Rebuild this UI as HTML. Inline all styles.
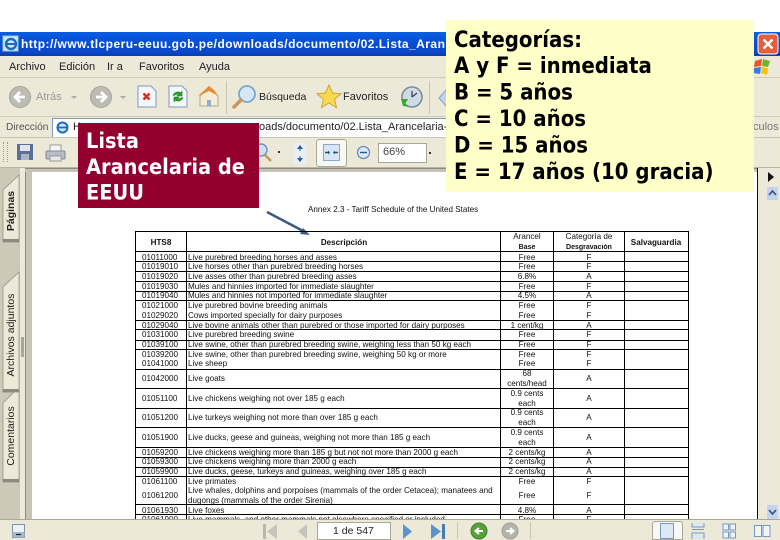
<!DOCTYPE html>
<html><head><meta charset="utf-8">
<style>
html,body{margin:0;padding:0;background:#fff}
#p{position:relative;width:780px;height:540px;overflow:hidden;background:#fff;font-family:"Liberation Sans",sans-serif}
#p div,#p svg{position:absolute}
.t{white-space:nowrap;font-size:11px;color:#222;line-height:14px}
.b{background:#000}
#doc{left:0;top:0;width:780px;height:540px}
#doc span{position:absolute;white-space:nowrap;font-size:8.1px;line-height:10px;color:#111;margin-top:.7px;filter:blur(.35px)}
.c{transform:translateX(-50%)}
</style></head><body><div id="p">

<div style="left:0;top:32px;width:780px;height:24px;background:linear-gradient(#0a5fe0,#0852d8 30%,#0b46c8 85%,#0a3cb0)"></div>
<svg style="left:2px;top:35px" width="17" height="17" viewBox="0 0 17 17"><rect x="1" y="1" width="15" height="15" fill="#cfe6f8" stroke="#9cc"/><circle cx="9" cy="9" r="5" fill="none" stroke="#1a6cc0" stroke-width="2.4"/><path d="M4 9h10" stroke="#1a6cc0" stroke-width="2"/></svg>
<div class="t" style="left:21px;top:37px;font:bold 12px/15px 'Liberation Sans',sans-serif;color:#fff;letter-spacing:.46px">http://www.tlcperu-eeuu.gob.pe/downloads/documento/02.Lista_Aran</div>
<svg style="left:757px;top:33px" width="23" height="23" viewBox="0 0 23 23"><rect x="1" y="1" width="20" height="20" rx="3" fill="#e2603c" stroke="#fff"/><path d="M6.500 6.500l9 9M15.500 6.500l-9 9" stroke="#fff" stroke-width="2.400"/></svg>

<div style="left:0;top:56px;width:780px;height:112px;background:#ece9d8"></div>
<div style="left:0;top:77px;width:780px;height:1px;background:#d0cdbb"></div>
<div class="t" style="left:9px;top:60px">Archivo</div>
<div class="t" style="left:59px;top:60px">Edición</div>
<div class="t" style="left:107px;top:60px">Ir a</div>
<div class="t" style="left:139px;top:60px">Favoritos</div>
<div class="t" style="left:199px;top:60px">Ayuda</div>
<svg style="left:753px;top:58px" width="20" height="18" viewBox="0 0 20 18"><path d="M2 3l7-2-1 7-7 1z" fill="#e8562a"/><path d="M10 1l7 2-2 6-6-1z" fill="#6fb52c"/><path d="M1 10l7-1-1 7-7-1z" fill="#3b7be0"/><path d="M9 9l6 1-1 7-6-2z" fill="#f5c21a"/></svg>

<!-- main toolbar -->
<svg style="left:8px;top:85px" width="25" height="25" viewBox="0 0 25 25"><circle cx="12" cy="12" r="10.500" fill="#bcbcb4" stroke="#a5a59c"/><path d="M17 12H8M12 7l-5 5 5 5" stroke="#fff" stroke-width="2.800" fill="none"/></svg>
<div class="t" style="left:36px;top:90px;color:#999">Atrás</div>
<div style="left:71px;top:96px;border:3px solid transparent;border-top-color:#aaa"></div>
<svg style="left:89px;top:85px" width="25" height="25" viewBox="0 0 25 25"><circle cx="12" cy="12" r="10.500" fill="#bcbcb4" stroke="#a5a59c"/><path d="M7 12h9M12 7l5 5-5 5" stroke="#fff" stroke-width="2.800" fill="none"/></svg>
<div style="left:120px;top:96px;border:3px solid transparent;border-top-color:#aaa"></div>
<svg style="left:137px;top:85px" width="20" height="23" viewBox="0 0 20 23"><path d="M1 1h13l5 5v16H1z" fill="#f4f7fc" stroke="#7e9cc4"/><path d="M6.500 8.500l6 6M12.500 8.500l-6 6" stroke="#d83020" stroke-width="2.600"/></svg>
<svg style="left:168px;top:85px" width="20" height="23" viewBox="0 0 20 23"><path d="M1 1h13l5 5v16H1z" fill="#f4f7fc" stroke="#7e9cc4"/><path d="M5 11a5 5 0 0 1 8-3l1-2v5h-5l2-2M15 12a5 5 0 0 1-8 3l-1 2v-5h5l-2 2" fill="#2aa02a" stroke="#1c801c" stroke-width=".6"/></svg>
<svg style="left:197px;top:84px" width="24" height="24" viewBox="0 0 24 24"><path d="M3 12l9-9 9 9v10H3z" fill="#f3ecd6" stroke="#b0a890"/><path d="M1 12L12 2l5 4 4 6-5-3-4-2z" fill="#e98a30"/><path d="M10 22v-6h4v6z" fill="#8ab0d8"/></svg>
<div style="left:226px;top:81px;width:1px;height:33px;background:#c9c6b4"></div>
<svg style="left:232px;top:84px" width="26" height="26" viewBox="0 0 26 26"><circle cx="15" cy="10" r="8" fill="#d5e8f8" stroke="#7fa5cc" stroke-width="1.800"/><path d="M9 16l-7 7" stroke="#c89858" stroke-width="3.600" stroke-linecap="round"/></svg>
<div class="t" style="left:259px;top:90px;font-size:10.500px">Búsqueda</div>
<svg style="left:316px;top:84px" width="26" height="25" viewBox="0 0 26 25"><path d="M13 1l3.500 8 8.500.8-6.400 5.500 1.900 8.300L13 19l-7.500 4.600 1.900-8.300L1 9.800 9.500 9z" fill="#fbd94f" stroke="#c8a838"/></svg>
<div class="t" style="left:343px;top:90px">Favoritos</div>
<svg style="left:399px;top:85px" width="25" height="25" viewBox="0 0 25 25"><circle cx="13" cy="12" r="10" fill="#cfdbe4" stroke="#7c8c98" stroke-width="1.600"/><path d="M13 12l5-4M13 12V6" stroke="#345" stroke-width="1.300"/><path d="M2 14h7l-3 5 4 3-6-1z" fill="#3aa62c"/></svg>
<div style="left:429px;top:81px;width:1px;height:33px;background:#c9c6b4"></div>
<svg style="left:438px;top:86px" width="10" height="24" viewBox="0 0 10 24"><path d="M1 12L9 3v18z" fill="#c0d4ec" stroke="#8aa0c0"/></svg>

<!-- address -->
<div style="left:0;top:116px;width:780px;height:1px;background:#cfccba"></div>
<div class="t" style="left:6px;top:121px;color:#555;font-size:10.200px">Dirección</div>
<div style="left:52px;top:118px;width:694px;height:18px;background:#fff;border:1px solid #7f9db9"></div>
<svg style="left:55px;top:120px" width="15" height="15" viewBox="0 0 15 15"><circle cx="7.500" cy="7.500" r="5" fill="#cfe6f8" stroke="#1a6cc0" stroke-width="2"/><path d="M2 7.500h11" stroke="#1a6cc0" stroke-width="1.800"/></svg>
<div class="t" style="left:73px;top:120px">H</div>
<div class="t" style="left:259px;top:120px">oads/documento/02.Lista_Arancelaria-E</div>
<div class="t" style="left:753px;top:120px;color:#777">culos</div>
<div style="left:0;top:137px;width:780px;height:1px;background:#c9c6b4"></div>

<!-- acrobat toolbar -->
<div style="left:3px;top:142px;width:3px;height:20px;border-left:1px dotted #999;border-right:1px dotted #999"></div>
<svg style="left:16px;top:143px" width="18" height="18" viewBox="0 0 18 18"><rect x="1" y="1" width="16" height="16" fill="#5a6f96"/><rect x="4" y="2" width="10" height="6" fill="#dfe6ee"/><rect x="5" y="11" width="8" height="6" fill="#aab6c6"/></svg>
<svg style="left:45px;top:144px" width="21" height="18" viewBox="0 0 21 18"><rect x="5" y="1" width="11" height="7" fill="#f5f5f5" stroke="#999"/><rect x="1" y="7" width="19" height="8" rx="1" fill="#b8bcc4" stroke="#808898"/><rect x="5" y="12" width="11" height="5" fill="#e8e8e8" stroke="#999"/></svg>
<svg style="left:257px;top:143px" width="16" height="20" viewBox="0 0 16 20"><circle cx="4" cy="7" r="6" fill="#cfe0f4" stroke="#7090b8" stroke-width="1.400"/><path d="M8 12l6 6" stroke="#c89858" stroke-width="2.600"/></svg>
<div style="left:278px;top:151px;width:2px;height:2px;background:#333"></div>
<svg style="left:293px;top:142px" width="14" height="23" viewBox="0 0 14 23"><rect x="1" y="1" width="12" height="21" fill="#e6eef8"/><path d="M7 3l-3 4h6zM7 20l-3-4h6z" fill="#2a5a90"/><path d="M7 6v3M7 14v3" stroke="#2a5a90"/></svg>
<div style="left:316px;top:139px;width:29px;height:26px;border:1px solid #a8a898;border-radius:3px;background:#f8f8f4"></div>
<svg style="left:323px;top:144px" width="18" height="18" viewBox="0 0 18 18"><rect x=".5" y=".5" width="16" height="16" fill="#d8e6f6" stroke="#8aa8cc"/><path d="M2 8.500h4M11 8.500h4" stroke="#24507c" stroke-width="1.400"/><path d="M5 6.500l2 2-2 2zM12 6.500l-2 2 2 2z" fill="#24507c"/></svg>
<svg style="left:356px;top:145px" width="15" height="15" viewBox="0 0 15 15"><circle cx="7.500" cy="7.500" r="6" fill="#dce8f6" stroke="#6e8cb4" stroke-width="1.300"/><path d="M4 7.500h7" stroke="#2a5a90" stroke-width="1.400"/></svg>
<div style="left:378px;top:143px;width:47px;height:18px;background:#fff;border:1px solid #a8a898"></div>
<div class="t" style="left:383px;top:145px;color:#444">66%</div>
<div style="left:429px;top:152px;width:2px;height:2px;background:#333"></div>
<div style="left:0;top:167px;width:780px;height:1px;background:#b8b5a2"></div>

<!-- left panel -->
<div style="left:0;top:168px;width:20px;height:352px;background:#ccc9b8"></div>
<div style="left:20px;top:168px;width:5px;height:352px;background:#ece9d8"></div>
<div style="left:21px;top:337px;width:3px;height:20px;background:#a8a696"></div>
<div style="left:25px;top:168px;width:7px;height:352px;background:#c6c4b4;border-left:1px solid #8c8a7c;box-sizing:border-box"></div>
<div style="left:25px;top:168px;width:732px;height:4px;background:#c6c4b4;border-top:1px solid #8c8a7c;box-sizing:border-box"></div>
<div style="left:32px;top:172px;width:725px;height:347px;background:#fff"></div>

<svg style="left:0;top:168px" width="20" height="320" viewBox="0 0 20 320">
<path d="M3 22L19 7v67H3z" fill="#ece9d8" stroke="#8c8a7c" stroke-width=".7"/><rect x="3" y="71" width="16" height="3" fill="#8c8a7c"/>
<path d="M3 119l16-15v120H3z" fill="#ece9d8" stroke="#8c8a7c" stroke-width=".7"/><rect x="3" y="221" width="16" height="3" fill="#8c8a7c"/>
<path d="M3 235l11-11h5v90H3z" fill="#ece9d8" stroke="#8c8a7c" stroke-width=".7"/><rect x="3" y="311" width="16" height="3" fill="#8c8a7c"/>
</svg>
<div style="left:-24px;top:204px;width:70px;height:14px;font:bold 10.500px/14px 'Liberation Sans',sans-serif;color:#222;transform:rotate(-90deg);text-align:center">Páginas</div>
<div style="left:-54px;top:328px;width:130px;height:14px;font:10.500px/14px 'Liberation Sans',sans-serif;color:#222;transform:rotate(-90deg);text-align:center">Archivos adjuntos</div>
<div style="left:-43px;top:429px;width:108px;height:14px;font:10.500px/14px 'Liberation Sans',sans-serif;color:#222;transform:rotate(-90deg);text-align:center">Comentarios</div>

<!-- scrollbar -->
<div style="left:757px;top:168px;width:1px;height:351px;background:#111"></div>
<div style="left:758px;top:168px;width:22px;height:351px;background:#ece9d8"></div>
<div style="left:767px;top:187px;width:11px;height:13px;background:#c4d4f0"></div>
<div style="left:767px;top:505px;width:11px;height:14px;background:#c4d4f0"></div>
<svg style="left:767px;top:187px" width="11" height="13"><path d="M2 8l3.500-4L9 8" stroke="#38507c" stroke-width="1.700" fill="none"/></svg>
<svg style="left:767px;top:505px" width="11" height="14"><path d="M2 5l3.500 4L9 5" stroke="#38507c" stroke-width="1.700" fill="none"/></svg>
<div style="left:768px;top:172px;border:5px solid transparent;border-left:6px solid #111;border-right:0"></div>

<!-- document -->
<div id="doc">
<span style="left:308px;top:204px">Annex 2.3 - Tariff Schedule of the United States</span>
<svg style="left:264px;top:210px;position:absolute" width="50" height="30"><path d="M3 2l38 20" stroke="#3d5a80" stroke-width="2.500"/><path d="M46 25l-10-1 3-6z" fill="#3d5a80"/></svg>

<div class="b" style="left:135px;top:231px;width:554px;height:1px"></div>
<div class="b" style="left:135px;top:231px;width:1px;height:288px"></div>
<div class="b" style="left:186px;top:231px;width:1px;height:288px"></div>
<div class="b" style="left:500px;top:231px;width:1px;height:288px"></div>
<div class="b" style="left:553px;top:231px;width:1px;height:288px"></div>
<div class="b" style="left:624px;top:231px;width:1px;height:288px"></div>
<div class="b" style="left:688px;top:231px;width:1px;height:288px"></div>

<div class="b" style="left:135px;top:251px;width:554px;height:1px"></div>
<div class="b" style="left:135px;top:261px;width:554px;height:1px"></div>
<div class="b" style="left:135px;top:271px;width:554px;height:1px"></div>
<div class="b" style="left:135px;top:281px;width:554px;height:1px"></div>
<div class="b" style="left:135px;top:291px;width:554px;height:1px"></div>
<div class="b" style="left:135px;top:300px;width:554px;height:1px"></div>
<div class="b" style="left:135px;top:320px;width:554px;height:1px"></div>
<div class="b" style="left:135px;top:329px;width:554px;height:1px"></div>
<div class="b" style="left:135px;top:340px;width:554px;height:1px"></div>
<div class="b" style="left:135px;top:349px;width:554px;height:1px"></div>
<div class="b" style="left:135px;top:369px;width:554px;height:1px"></div>
<div class="b" style="left:135px;top:388px;width:554px;height:1px"></div>
<div class="b" style="left:135px;top:408px;width:554px;height:1px"></div>
<div class="b" style="left:135px;top:427px;width:554px;height:1px"></div>
<div class="b" style="left:135px;top:447px;width:554px;height:1px"></div>
<div class="b" style="left:135px;top:457px;width:554px;height:1px"></div>
<div class="b" style="left:135px;top:467px;width:554px;height:1px"></div>
<div class="b" style="left:135px;top:476px;width:554px;height:1px"></div>
<div class="b" style="left:135px;top:504px;width:554px;height:1px"></div>
<div class="b" style="left:135px;top:514px;width:554px;height:1px"></div>

<span class="c" style="left:161px;top:237px;font-weight:bold">HTS8</span>
<span class="c" style="left:344px;top:237px;font-weight:bold">Descripción</span>
<span class="c" style="left:527px;top:231px">Arancel</span>
<span class="c" style="left:527px;top:242px;font-size:7px;font-weight:bold">Base</span>
<span class="c" style="left:589px;top:231px">Categoría de</span>
<span class="c" style="left:589px;top:242px;font-size:7px;font-weight:bold">Desgravación</span>
<span class="c" style="left:656px;top:237px;font-weight:bold">Salvaguardia</span>

<span style="left:142px;top:252px">01011000</span><span style="left:188px;top:252px">Live purebred breeding horses and asses</span><span class="c" style="left:527px;top:252px">Free</span><span class="c" style="left:589px;top:252px">F</span>
<span style="left:142px;top:261px">01019010</span><span style="left:188px;top:261px">Live horses other than purebred breeding horses</span><span class="c" style="left:527px;top:261px">Free</span><span class="c" style="left:589px;top:261px">F</span>
<span style="left:142px;top:271px">01019020</span><span style="left:188px;top:271px">Live asses other than purebred breeding asses</span><span class="c" style="left:527px;top:271px">6.8%</span><span class="c" style="left:589px;top:271px">A</span>
<span style="left:142px;top:281px">01019030</span><span style="left:188px;top:281px">Mules and hinnies imported for immediate slaughter</span><span class="c" style="left:527px;top:281px">Free</span><span class="c" style="left:589px;top:281px">F</span>
<span style="left:142px;top:290px">01019040</span><span style="left:188px;top:290px">Mules and hinnies not imported for immediate slaughter</span><span class="c" style="left:527px;top:290px">4.5%</span><span class="c" style="left:589px;top:290px">A</span>
<span style="left:142px;top:300px">01021000</span><span style="left:188px;top:300px">Live purebred bovine breeding animals</span><span class="c" style="left:527px;top:300px">Free</span><span class="c" style="left:589px;top:300px">F</span>
<span style="left:142px;top:310px">01029020</span><span style="left:188px;top:310px">Cows imported specially for dairy purposes</span><span class="c" style="left:527px;top:310px">Free</span><span class="c" style="left:589px;top:310px">F</span>
<span style="left:142px;top:320px">01029040</span><span style="left:188px;top:320px">Live bovine animals other than purebred or those imported for dairy purposes</span><span class="c" style="left:527px;top:320px">1 cent/kg</span><span class="c" style="left:589px;top:320px">A</span>
<span style="left:142px;top:329px">01031000</span><span style="left:188px;top:329px">Live purebred breeding swine</span><span class="c" style="left:527px;top:329px">Free</span><span class="c" style="left:589px;top:329px">F</span>
<span style="left:142px;top:339px">01039100</span><span style="left:188px;top:339px">Live swine, other than purebred breeding swine, weighing less than 50 kg each</span><span class="c" style="left:527px;top:339px">Free</span><span class="c" style="left:589px;top:339px">F</span>
<span style="left:142px;top:349px">01039200</span><span style="left:188px;top:349px">Live swine, other than purebred breeding swine, weighing 50 kg or more</span><span class="c" style="left:527px;top:349px">Free</span><span class="c" style="left:589px;top:349px">F</span>
<span style="left:142px;top:358px">01041000</span><span style="left:188px;top:358px">Live sheep</span><span class="c" style="left:527px;top:358px">Free</span><span class="c" style="left:589px;top:358px">F</span>

<span style="left:142px;top:373px">01042000</span><span style="left:188px;top:373px">Live goats</span><span class="c" style="left:527px;top:368px">68</span><span class="c" style="left:527px;top:378px">cents/head</span><span class="c" style="left:589px;top:373px">A</span>
<span style="left:142px;top:393px">01051100</span><span style="left:188px;top:393px">Live chickens weighing not over 185 g each</span><span class="c" style="left:527px;top:388px">0.9 cents</span><span class="c" style="left:527px;top:398px">each</span><span class="c" style="left:589px;top:393px">A</span>
<span style="left:142px;top:412px">01051200</span><span style="left:188px;top:412px">Live turkeys weighing not more than over 185 g each</span><span class="c" style="left:527px;top:407px">0.9 cents</span><span class="c" style="left:527px;top:417px">each</span><span class="c" style="left:589px;top:412px">A</span>
<span style="left:142px;top:432px">01051900</span><span style="left:188px;top:432px">Live ducks, geese and guineas, weighing not more than 185 g each</span><span class="c" style="left:527px;top:427px">0.9 cents</span><span class="c" style="left:527px;top:437px">each</span><span class="c" style="left:589px;top:432px">A</span>

<span style="left:142px;top:447px">01059200</span><span style="left:188px;top:447px">Live chickens weighing more than 185 g but not not more than 2000 g each</span><span class="c" style="left:527px;top:447px">2 cents/kg</span><span class="c" style="left:589px;top:447px">A</span>
<span style="left:142px;top:456px">01059300</span><span style="left:188px;top:456px">Live chickens weighing more than 2000 g each</span><span class="c" style="left:527px;top:456px">2 cents/kg</span><span class="c" style="left:589px;top:456px">A</span>
<span style="left:142px;top:466px">01059900</span><span style="left:188px;top:466px">Live ducks, geese, turkeys and guineas, weighing over 185 g each</span><span class="c" style="left:527px;top:466px">2 cents/kg</span><span class="c" style="left:589px;top:466px">A</span>
<span style="left:142px;top:476px">01061100</span><span style="left:188px;top:476px">Live primates</span><span class="c" style="left:527px;top:476px">Free</span><span class="c" style="left:589px;top:476px">F</span>
<span style="left:142px;top:490px">01061200</span><span style="left:188px;top:485px">Live whales, dolphins and porpoises (mammals of the order Cetacea); manatees and</span><span style="left:188px;top:495px">dugongs (mammals of the order Sirenia)</span><span class="c" style="left:527px;top:490px">Free</span><span class="c" style="left:589px;top:490px">F</span>
<span style="left:142px;top:505px">01061930</span><span style="left:188px;top:505px">Live foxes</span><span class="c" style="left:527px;top:505px">4.8%</span><span class="c" style="left:589px;top:505px">A</span>
<span style="left:142px;top:514px">01061900</span><span style="left:188px;top:514px">Live mammals, and other mammals not elsewhere specified or included</span><span class="c" style="left:527px;top:514px">Free</span><span class="c" style="left:589px;top:514px">F</span>
</div>

<!-- status bar -->
<div style="left:0;top:519px;width:780px;height:21px;background:#ece9d8;border-top:1px solid #aca899;box-sizing:border-box"></div>
<svg style="left:12px;top:524px" width="14" height="15"><rect x=".5" y=".5" width="12" height="13" fill="#eef2f8" stroke="#8090a4"/><rect x=".5" y="8" width="12" height="5.500" fill="#a8b8cc"/><path d="M4 10.500h5" stroke="#223" stroke-width="1.200"/></svg>
<svg style="left:262px;top:523px" width="16" height="17"><rect x="1" y="1" width="3" height="15" fill="#b8b8ac"/><path d="M15 1L5 8.500 15 16z" fill="#c4c4b8"/></svg>
<svg style="left:297px;top:523px" width="11" height="17"><path d="M10 1L1 8.500 10 16z" fill="#c4c4b8"/></svg>
<div style="left:317px;top:522px;width:74px;height:18px;background:#fff;border:1px solid #a8a898;box-sizing:border-box"></div>
<div class="t" style="left:333px;top:523px;font-size:10.500px;line-height:16px">1 de 547</div>
<svg style="left:402px;top:523px" width="11" height="17"><path d="M1 1l9 7.500L1 16z" fill="#5b93d0"/></svg>
<svg style="left:430px;top:523px" width="16" height="17"><path d="M1 1l10 7.500L1 16z" fill="#5b93d0"/><rect x="12" y="1" width="3" height="15" fill="#4a7cb4"/></svg>
<div style="left:457px;top:522px;width:1px;height:17px;background:#c9c6b4"></div>
<svg style="left:470px;top:522px" width="18" height="18"><circle cx="9" cy="9" r="8" fill="#58a03c" stroke="#3f8228"/><path d="M13 9H6M9 6L5.500 9 9 12" stroke="#fff" stroke-width="2" fill="none"/></svg>
<svg style="left:501px;top:522px" width="18" height="18"><circle cx="9" cy="9" r="8" fill="#b4b4aa" stroke="#a0a096"/><path d="M5 9h7M9 6l3.500 3L9 12" stroke="#fff" stroke-width="2" fill="none"/></svg>
<div style="left:530px;top:522px;width:1px;height:17px;background:#c9c6b4"></div>
<div style="left:652px;top:521px;width:31px;height:19px;background:#f8f8f4;border:1px solid #a8a898;border-radius:3px 3px 0 0;box-sizing:border-box"></div>
<svg style="left:660px;top:523px" width="15" height="16"><rect x=".5" y=".5" width="13" height="15" fill="#dce8f6" stroke="#7898c0"/></svg>
<svg style="left:691px;top:522px" width="14" height="18"><path d="M1 1v4h12V1M1 7.500h12M1 17v-6h12v6" fill="#dce8f6" stroke="#7898c0"/></svg>
<svg style="left:722px;top:523px" width="15" height="16"><path d="M1 1h5.500v6H1zM8 1h5.500v6H8zM1 9h5.500v6H1zM8 9h5.500v6H8z" fill="#f0f4fa" stroke="#7898c0"/></svg>
<svg style="left:754px;top:525px" width="17" height="13"><path d="M.5.500h7v11h-7zM9 .5h7v11H9z" fill="#f0f4fa" stroke="#7898c0"/></svg>

<!-- overlays -->
<div style="left:78px;top:123px;width:181px;height:85px;background:#930030"></div>
<div style="left:86px;top:127.600px;font:bold 19.400px/23px 'DejaVu Sans',sans-serif;color:#fff;white-space:nowrap;transform:scale(1,1.120);transform-origin:0 0">Lista<br>Arancelaria de<br>EEUU</div>
<div style="left:446px;top:20px;width:308px;height:172px;background:#ffffc8"></div>
<div style="left:454px;top:27.300px;font:bold 19.800px/23.900px 'DejaVu Sans',sans-serif;color:#000;white-space:nowrap;transform:scale(1,1.100);transform-origin:0 0">Categorías:<br>A y F = inmediata<br>B = 5 años<br>C = 10 años<br>D = 15 años<br>E = 17 años (10 gracia)</div>

</div></body></html>
